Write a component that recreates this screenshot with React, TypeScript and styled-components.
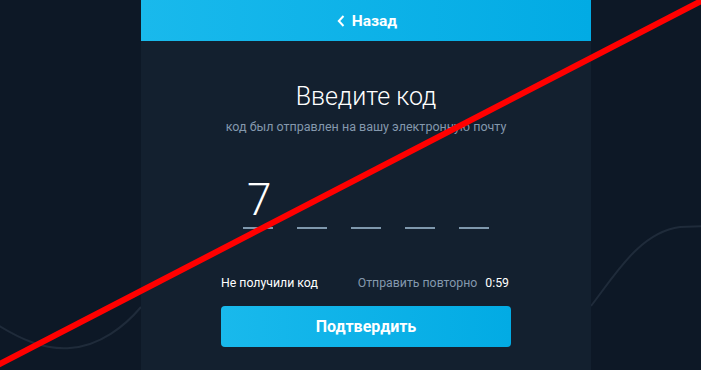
import React from 'react';
import styled, { createGlobalStyle } from 'styled-components';

const GlobalStyle = createGlobalStyle`
  html, body {
    margin: 0;
    padding: 0;
    height: 370px;
    overflow: hidden;
    background: #0d1826;
    font-family: Roboto, 'Noto Sans', sans-serif;
  }
`;

const CODE = ['7', '', '', '', ''];

export default function App() {
  return (
    <>
      <GlobalStyle />
      <Page>
        <Waves viewBox="0 0 701 370" width="701" height="370">
          <path d="M-10 320 C 20 340, 45 350, 70 348 C 100 346, 125 326, 141 307" />
          <path d="M591 306 C 615 275, 640 232, 680 227 L 710 226" />
        </Waves>

        <Panel>
          <Header>
            <Chevron viewBox="0 0 8 12" width="8" height="12">
              <path d="M6.5 1 L1.8 6 L6.5 11" />
            </Chevron>
            Назад
          </Header>

          <Body>
            <Title>Введите код</Title>
            <Subtitle>код был отправлен на вашу электронную почту</Subtitle>

            <CodeRow>
              {CODE.map((d, i) => (
                <DigitCell key={i}>
                  <Digit>{d}</Digit>
                </DigitCell>
              ))}
            </CodeRow>

            <ResendRow>
              <WhiteText>Не получили код</WhiteText>
              <ResendGroup>
                <MutedText>Отправить повторно</MutedText>
                <WhiteText>0:59</WhiteText>
              </ResendGroup>
            </ResendRow>

            <SubmitButton>Подтвердить</SubmitButton>
          </Body>
        </Panel>

        <Strike viewBox="0 0 701 370" width="701" height="370">
          <line x1="-4" y1="366" x2="705" y2="-1" />
        </Strike>
      </Page>
    </>
  );
}

const Page = styled.div`
  position: relative;
  width: 701px;
  height: 370px;
  display: flex;
  padding-left: 141px;
  box-sizing: border-box;
  overflow: hidden;
`;

const Waves = styled.svg`
  position: absolute;
  left: 0;
  top: 0;
  path {
    fill: none;
    stroke: #1f2b3a;
    stroke-width: 2;
  }
`;

const Strike = styled.svg`
  position: absolute;
  left: 0;
  top: 0;
  pointer-events: none;
  line {
    stroke: #ff0000;
    stroke-width: 6;
  }
`;

const Panel = styled.div`
  position: relative;
  width: 450px;
  height: 370px;
  background: #13202f;
  display: flex;
  flex-direction: column;
`;

const Header = styled.div`
  height: 41px;
  display: flex;
  align-items: center;
  justify-content: center;
  gap: 7px;
  background: linear-gradient(90deg, #19b9ec 0%, #02abe4 100%);
  color: #ffffff;
  font-size: 15.5px;
  font-weight: 700;
  padding-left: 2px;
`;

const Chevron = styled.svg`
  path {
    fill: none;
    stroke: #ffffff;
    stroke-width: 2;
  }
`;

const Body = styled.div`
  display: flex;
  flex-direction: column;
  align-items: center;
  padding-top: 41px;
`;

const Title = styled.div`
  font-size: 25px;
  line-height: 30px;
  font-weight: 300;
  color: #ffffff;
`;

const Subtitle = styled.div`
  margin-top: 7px;
  font-size: 12.5px;
  line-height: 16px;
  color: #8498ad;
`;

const CodeRow = styled.div`
  margin-top: 43px;
  display: flex;
  gap: 24px;
`;

const DigitCell = styled.div`
  width: 30px;
  padding-bottom: 5px;
  border-bottom: 2px solid #7f98ad;
`;

const Digit = styled.div`
  height: 44px;
  font-size: 44px;
  line-height: 1;
  font-weight: 300;
  color: #ffffff;
  padding-left: 4px;
`;

const ResendRow = styled.div`
  margin-top: 46px;
  width: 290px;
  display: flex;
  justify-content: space-between;
  font-size: 12.3px;
  line-height: 16px;
`;

const ResendGroup = styled.div`
  display: flex;
  gap: 8px;
  padding-right: 2px;
`;

const WhiteText = styled.span`
  color: #ffffff;
`;

const MutedText = styled.span`
  color: #8498ad;
`;

const SubmitButton = styled.button`
  margin-top: 15px;
  width: 290px;
  height: 41px;
  border: none;
  border-radius: 4px;
  background: linear-gradient(90deg, #19b9ec 0%, #02abe4 100%);
  color: #ffffff;
  font-family: Roboto, 'Noto Sans', sans-serif;
  font-size: 16px;
  font-weight: 700;
  cursor: pointer;
`;
